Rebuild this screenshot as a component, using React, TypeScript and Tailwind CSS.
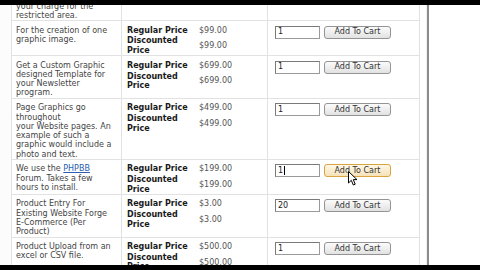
import React from "react";

type Row = {
  h: string;
  desc: React.ReactNode[];
  reg?: string;
  disc?: string;
  qty?: string;
  hover?: boolean;
  caret?: boolean;
  top?: boolean;
};

const rows: Row[] = [
  { h: "h-[20px]", desc: ["your charge for the", "restricted area."], top: true },
  { h: "h-[36px]", desc: ["For the creation of one", "graphic image."], reg: "$99.00", disc: "$99.00", qty: "1" },
  {
    h: "h-[43px]",
    desc: ["Get a Custom Graphic", "designed Template for", "your Newsletter", "program."],
    reg: "$699.00",
    disc: "$699.00",
    qty: "1",
  },
  {
    h: "h-[61px]",
    desc: [
      "Page Graphics go",
      "throughout",
      "your Website pages. An",
      "example of such a",
      "graphic would include a",
      "photo and text.",
    ],
    reg: "$499.00",
    disc: "$499.00",
    qty: "1",
  },
  {
    h: "h-[36px]",
    desc: [
      <>
        We use the <span className="text-[#2a5db0] underline">PHPBB</span>
      </>,
      "Forum. Takes a few",
      "hours to install.",
    ],
    reg: "$199.00",
    disc: "$199.00",
    qty: "1",
    hover: true,
    caret: true,
  },
  {
    h: "h-[43px]",
    desc: ["Product Entry For", "Existing Website Forge", "E-Commerce (Per", "Product)"],
    reg: "$3.00",
    disc: "$3.00",
    qty: "20",
  },
  {
    h: "h-[44px]",
    desc: ["Product Upload from an", "excel or CSV file."],
    reg: "$500.00",
    disc: "$500.00",
    qty: "1",
  },
];

function TableRow({ r }: { r: Row }) {
  return (
    <div className={`flex ${r.h} ${r.top ? "" : "border-t border-[#e2e2e2]"}`}>
      <div className={`w-[110px] shrink-0 border-r border-[#e2e2e2] pl-[4px] ${r.top ? "pt-[1.5px]" : "pt-[4.5px]"} text-[#444]`}>
        {r.desc.map((d, i) => (
          <div key={i} className="whitespace-nowrap">
            {d}
          </div>
        ))}
      </div>
      <div className="w-[146px] shrink-0 border-r border-[#e2e2e2] pl-[5px] pt-[4.5px]">
        {r.reg && (
          <>
            <div className="flex">
              <span className="w-[72px] shrink-0 font-bold text-[#1a1a1a]">Regular Price</span>
              <span className="text-[#555]">{r.reg}</span>
            </div>
            <div className="mt-[1.7px] flex items-center">
              <span className="w-[72px] shrink-0 font-bold text-[#1a1a1a]">
                Discounted
                <br />
                Price
              </span>
              <span className="text-[#555]">{r.disc}</span>
            </div>
          </>
        )}
      </div>
      <div className="w-[152px] shrink-0 border-r border-[#e2e2e2] pl-[7px] pt-[4.5px]">
        {r.qty && (
          <div className="flex items-start gap-[4px]">
            <div className="flex h-[13px] w-[45px] items-center border border-[#9a9a9a] border-l-[#7a7a7a] border-t-[#7a7a7a] bg-white pl-[2px] text-[#222]">
              <span>{r.qty}</span>
              {r.caret && <span className="ml-[1px] h-[9px] w-px bg-black" />}
            </div>
            <div
              className={`flex h-[13px] w-[67px] items-center justify-center rounded-[3px] border ${
                r.hover
                  ? "border-[#d9a440] bg-gradient-to-b from-[#fff8e6] to-[#f5e2b8]"
                  : "border-[#949494] bg-gradient-to-b from-[#fbfbfb] to-[#e2e2e2]"
              } text-[#333]`}
            >
              Add To Cart
            </div>
          </div>
        )}
      </div>
    </div>
  );
}

export default function App() {
  return (
    <div
      className="relative h-[270px] w-[480px] overflow-hidden bg-white text-[8px] leading-[9.3px]"
      style={{ fontFamily: '"DejaVu Sans", Verdana, sans-serif' }}
    >
      <div className="flex h-full">
        <div className="w-[12px] shrink-0 border-r border-[#e2e2e2] bg-[#fcfcfc]" />
        <div className="flex flex-col">
          {rows.map((r, i) => (
            <TableRow key={i} r={r} />
          ))}
        </div>
        <div className="w-[7px] shrink-0 border-r border-[#f0f0f0]" />
        <div className="w-[2px] shrink-0 bg-[#8c8c8c]" />
        <div className="flex-1 bg-white" />
      </div>

      {/* mouse cursor */}
      <svg className="absolute left-[348px] top-[171px]" width="11" height="16" viewBox="0 0 11 16">
        <path
          d="M0.5 0.5 L0.5 12 L3.3 9.3 L5.3 14 L7.2 13.2 L5.3 8.6 L9 8.6 Z"
          fill="#fff"
          stroke="#000"
          strokeWidth="1"
          strokeLinejoin="round"
        />
      </svg>

      {/* letterbox bars */}
      <div className="absolute left-0 right-0 top-0 h-[5px] bg-black" />
      <div className="absolute bottom-0 left-0 right-0 h-[5px] bg-black" />
    </div>
  );
}
